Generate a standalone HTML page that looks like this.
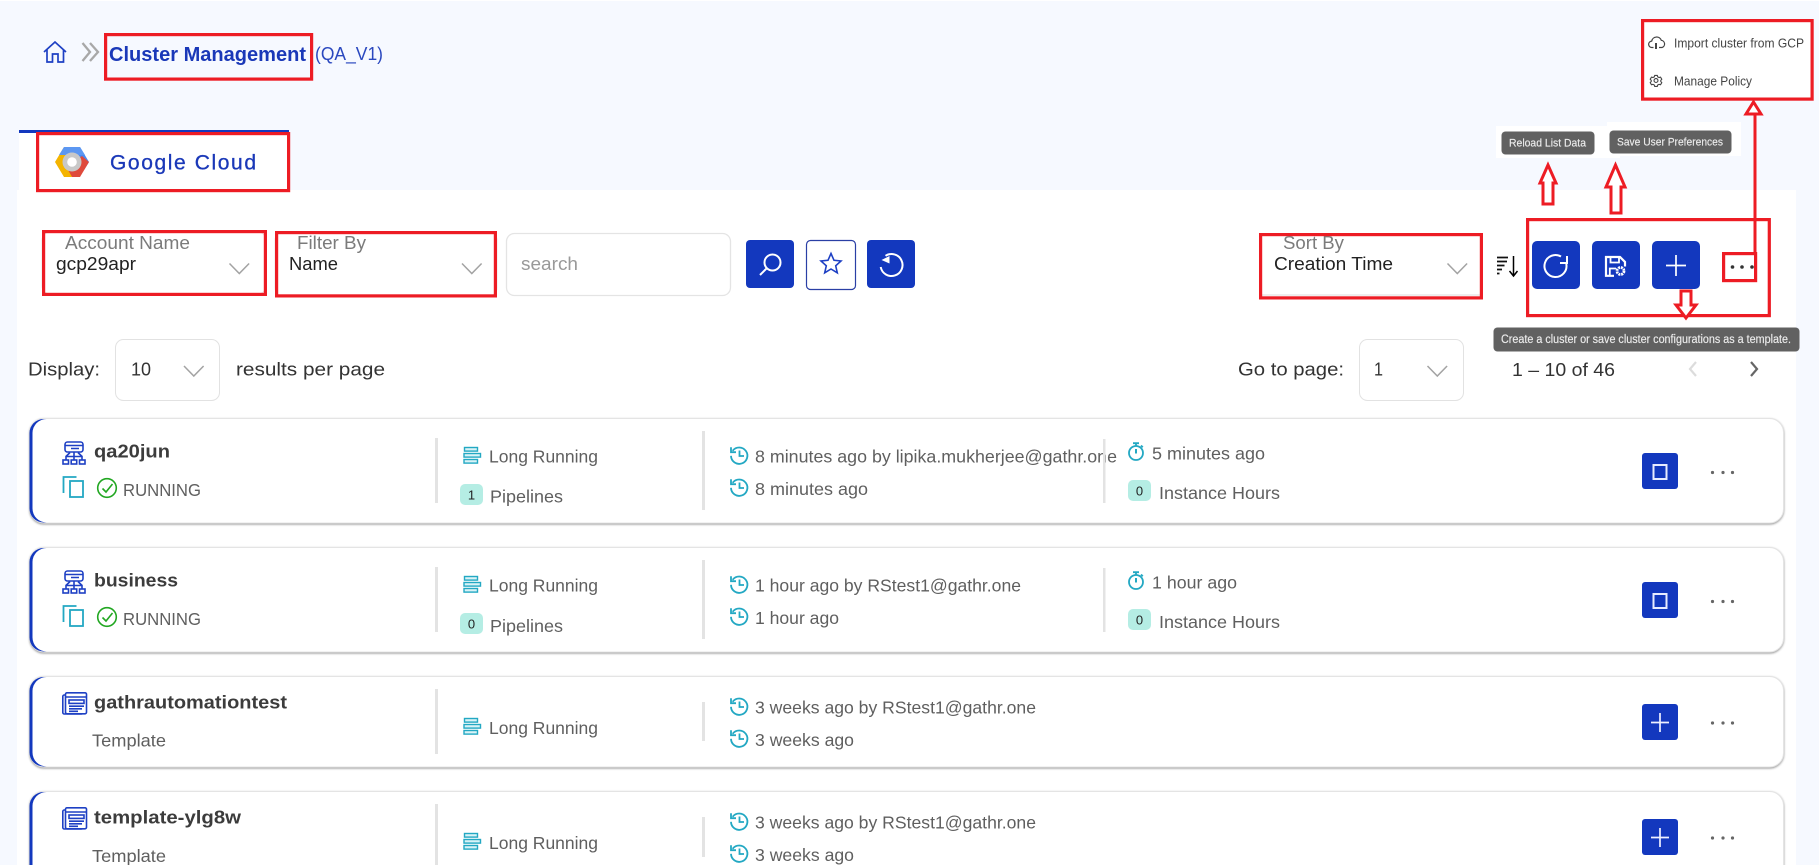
<!DOCTYPE html>
<html lang="en">
<head>
<meta charset="utf-8">
<title>Cluster Management</title>
<style>
html,body{margin:0;padding:0;background:#f6f9ff;width:1819px;height:865px;overflow:hidden}
svg{display:block;font-family:"Liberation Sans",Arial,sans-serif}
.r{fill:none;stroke:#ed1c24;stroke-width:3.2}
.ar{fill:#fff;stroke:#ed1c24;stroke-width:3}
.b{fill:#1338be}
.w{fill:none;stroke:#fff;stroke-width:2}
.t{fill:#5f5f5f;font-size:17.5px}
.n{fill:#3c3c3c;font-size:18.5px;font-weight:bold}
.l{fill:#7b7b7b;font-size:18px}
.v{fill:#222;font-size:18px}
.d{fill:#333;font-size:18px}
.tt{fill:#ececec;font-size:11px;stroke:#ececec;stroke-width:.15}
.ch{fill:none;stroke:#a3a3a3;stroke-width:1.5}
.div{fill:#e3e3e3}
.bd{fill:#b5ede4}
.bt{fill:#222;font-size:13px;text-anchor:middle}
.card{fill:#fff;stroke:#e4e4e4;stroke-width:1;filter:drop-shadow(0 1.5px 1px rgba(0,0,0,.42))}
.edge{fill:#1338be}
.inner{fill:#fff}
.teal{fill:none;stroke:#23a8c3;stroke-width:1.6}
.blue{fill:none;stroke:#1e40c4;stroke-width:1.6}
.dot{fill:#666}
</style>
</head>
<body>
<svg xmlns="http://www.w3.org/2000/svg" width="1819" height="865" viewBox="0 0 1819 865">
<defs>
<g id="net" class="blue"><rect x="3" y="1" width="18" height="10" rx="2.5"/><path d="M3 4.5H21M9 7.5H17" /><path d="M12 11V19M4 19V15.5H20V19M8 11.5L4 15.5M16 11.5L20 15.5"/><rect x="1" y="19" width="5.5" height="4"/><rect x="9.2" y="19" width="5.5" height="4"/><rect x="17.5" y="19" width="5.5" height="4"/></g>
<g id="copy" class="teal" style="stroke-width:1.8"><path d="M1 17V1H14"/><rect x="7.5" y="5" width="13" height="16"/></g>
<g id="chk" fill="none" stroke="#22a722" stroke-width="1.6"><circle cx="10" cy="10" r="9.300"/><path d="M5.5 10.5L9 14L15.5 6"/></g>
<g id="type" fill="#d9f3f7" stroke="#23a8c3" stroke-width="1.4"><rect x="1.5" y="1" width="13" height="3.6"/><rect x="1" y="7" width="16.5" height="3.6"/><rect x="1" y="13" width="13.5" height="3.6"/></g>
<g id="hist" class="teal" style="stroke-width:1.8"><path d="M2.6 4.8A8.2 8.2 0 1 1 1 9.8"/><path d="M1 1.2V6.2H6" /><path d="M9.5 4.5V10H14"/></g>
<g id="sw" class="teal" style="stroke-width:1.8"><circle cx="8" cy="11" r="7"/><path d="M5 1.2H11M8 1.2V4M13 3.5L14.8 5.3"/><path d="M8 7V11.5" stroke-width="2"/></g>
<g id="tpl" class="blue"><rect x="0.8" y="3" width="20" height="19" rx="1.5"/><rect x="3.5" y="0.8" width="21" height="21" rx="1.5" fill="#fff"/><path d="M3.5 5H24.5" /><rect x="7" y="8" width="15" height="3.4"/><path d="M7 14.2H22M7 16.8H20M7 19.3H16"/></g>
<g id="ch"><path class="ch" d="M0 0L9.8 10L19.6 0"/></g>
<g id="dots"><circle class="dot" cx="0" cy="0" r="1.600"/><circle class="dot" cx="10.500" cy="0" r="1.600"/><circle class="dot" cx="20" cy="0" r="1.600"/></g>
<g id="stop"><rect class="b" width="36" height="36" rx="3"/><rect x="11.5" y="12" width="13" height="14" fill="none" stroke="#e8ebff" stroke-width="2"/></g>
<g id="add"><rect class="b" width="36" height="36" rx="3"/><path d="M18 9V28M9 18.5H27" stroke="#eef0ff" stroke-width="1.7"/></g>
</defs>

<!-- page surfaces -->
<rect width="1819" height="1" fill="#fff"/>
<rect x="17" y="190" width="1779" height="675" fill="#fff"/>
<rect x="19" y="130" width="270" height="60" fill="#fff"/>
<rect x="19" y="130" width="270" height="3" fill="#1338be"/>

<!-- breadcrumb -->
<path d="M44 52L55 42L66 52M47 49.500V62H52.500V54H58V62H63.500V49.500" fill="none" stroke="#1e40c4" stroke-width="1.700"/>
<path d="M82.500 43L90 52L82.500 61M90 43L98 52L90 61" fill="none" stroke="#a8a8a8" stroke-width="2.300"/>
<text x="109" y="61" font-size="20.500" font-weight="bold" fill="#1a38b8" textLength="197" lengthAdjust="spacingAndGlyphs">Cluster Management</text>
<text x="315" y="60" font-size="18" fill="#2a48bf" textLength="68" lengthAdjust="spacingAndGlyphs">(QA_V1)</text>
<rect class="r" x="105.600" y="34.600" width="206" height="44.500"/>

<!-- tab -->
<path d="M64 147H80L89 162L84 170L72 162Z" fill="#4a8af0"/>
<path d="M89 162L80 177H72L66 170L72 162L82 156Z" fill="#df4a3c"/>
<path d="M55 162L64 147L72 155L67 168L72 177H64Z" fill="#f4b400"/>
<path d="M64 147H80L85 155H59Z" fill="#5c97f2"/>
<circle cx="72" cy="162" r="9.500" fill="#c8c8c8"/>
<circle cx="72" cy="162" r="4.800" fill="#fff"/>
<text x="110" y="169.300" font-size="21" fill="#1a38b8" stroke="#1a38b8" stroke-width=".3" textLength="146" lengthAdjust="spacing">Google Cloud</text>
<rect class="r" x="37.600" y="133.600" width="251" height="57"/>

<!-- top right menu -->
<rect x="1641" y="19" width="172" height="81" fill="#fff"/>
<path d="M1653.500 47.500h-1.500a3.200 3.200 0 0 1-.3-6.400a5 5 0 0 1 9.600-.8a3.700 3.700 0 0 1 .7 7.200H1659" fill="none" stroke="#444" stroke-width="1.200"/>
<path d="M1656 43V49" stroke="#444" stroke-width="2"/>
<g fill="none" stroke="#444" stroke-width="1.300" transform="translate(1656 80.500) scale(.85) translate(-1656 -80)"><circle cx="1656" cy="80" r="2.300"/><path d="M1654.500 74h3l.5 1.700 1.600.8 1.700-.5 1.500 2.500-1.200 1.400v1.200l1.200 1.400-1.500 2.500-1.700-.5-1.600.8-.5 1.700h-3l-.5-1.700-1.600-.8-1.700.5-1.500-2.500 1.200-1.400v-1.200l-1.200-1.400 1.500-2.500 1.700.5 1.600-.8z"/></g>
<text x="1674" y="47.500" font-size="13" fill="#444" textLength="130" lengthAdjust="spacingAndGlyphs">Import cluster from GCP</text>
<text x="1674" y="85.700" font-size="13" fill="#444" textLength="78" lengthAdjust="spacingAndGlyphs">Manage Policy</text>
<rect class="r" x="1642.600" y="20.600" width="169.500" height="78.500"/>

<!-- tooltips -->
<rect x="1496" y="126" width="124" height="32" fill="#fff"/>
<rect x="1607" y="122" width="134" height="34" fill="#fff"/>
<rect x="1501.500" y="131.500" width="93" height="23" rx="4" fill="#616161"/>
<rect x="1609.500" y="130.500" width="122" height="23" rx="4" fill="#616161"/>
<text class="tt" x="1509" y="146.700" textLength="77" lengthAdjust="spacingAndGlyphs">Reload List Data</text>
<text class="tt" x="1617" y="145.700" textLength="106" lengthAdjust="spacingAndGlyphs">Save User Preferences</text>

<!-- arrows -->
<path class="ar" d="M1548 165L1556 183H1553V204H1543V183H1540Z"/>
<path class="ar" d="M1615.500 165L1625 187H1621V213H1611V187H1606Z"/>
<path d="M1755 113V254" stroke="#ed1c24" stroke-width="3" fill="none"/>
<path class="ar" d="M1753.500 102L1761 114H1746Z"/>

<!-- filters -->
<rect x="42" y="232" width="224" height="62" rx="8" fill="#fff" stroke="#e6e6e6"/>
<rect x="275" y="232" width="222" height="64" rx="8" fill="#fff" stroke="#e6e6e6"/>
<text class="l" x="65" y="249" textLength="125" lengthAdjust="spacingAndGlyphs">Account Name</text>
<text class="v" x="56" y="270" textLength="80" lengthAdjust="spacingAndGlyphs">gcp29apr</text>
<use href="#ch" x="229.500" y="263.500"/>
<rect class="r" x="43.600" y="231.600" width="221.800" height="62.800"/>
<text class="l" x="297" y="249" textLength="69" lengthAdjust="spacingAndGlyphs">Filter By</text>
<text class="v" x="289" y="270" textLength="49" lengthAdjust="spacingAndGlyphs">Name</text>
<use href="#ch" x="462" y="263.500"/>
<rect class="r" x="276.600" y="232.600" width="218.800" height="63.300"/>

<rect x="506.500" y="233.500" width="224" height="62" rx="8" fill="#fff" stroke="#e4e4e4" stroke-width="1.300"/>
<text x="521" y="270" font-size="18" fill="#999" textLength="57" lengthAdjust="spacingAndGlyphs">search</text>

<rect class="b" x="746" y="240" width="48" height="48" rx="4"/>
<circle class="w" cx="772.500" cy="262.500" r="8"/>
<path class="w" d="M766.500 268.500L760 275"/>
<rect x="806.500" y="240.500" width="49" height="49" rx="4" fill="#fff" stroke="#2a3fa5" stroke-width="1.200"/>
<path d="M831 253.500L834 260.300L841 261L835.700 265.800L837.300 272.800L831 269L824.700 272.800L826.300 265.800L821 261L828 260.300Z" fill="none" stroke="#1e40c4" stroke-width="1.600"/>
<rect class="b" x="867" y="240" width="48" height="48" rx="4"/>
<path class="w" d="M885.500 255.800A11 11 0 1 1 880.700 267"/>
<path d="M881.500 260L889.500 256V263.500Z" fill="#fff"/>

<!-- sort -->
<rect x="1261" y="235" width="220" height="60" fill="#fff"/>
<path d="M1262 295H1481" stroke="#ddd" stroke-width="1"/>
<text class="l" x="1283" y="249" textLength="61" lengthAdjust="spacingAndGlyphs">Sort By</text>
<text class="v" x="1274" y="270" textLength="119" lengthAdjust="spacingAndGlyphs">Creation Time</text>
<use href="#ch" x="1447.500" y="263.500"/>
<rect class="r" x="1260.600" y="234.600" width="220.800" height="63.300"/>

<path d="M1497 257.500H1508M1497 261.500H1507M1497 265.500H1504.500M1497 269.500H1502M1497 273.500H1499.500" stroke="#111" stroke-width="1.800" fill="none"/>
<path d="M1513.500 256V275.500M1509.500 271L1513.500 276L1517.500 271" stroke="#000" stroke-width="1.500" fill="none"/>

<!-- action buttons -->
<rect class="b" x="1532" y="241" width="48" height="48" rx="5"/>
<path class="w" d="M1566.300 264A11 11 0 1 1 1561 256.500"/>
<path class="w" d="M1567 256V263H1560" stroke-width="1.800"/>
<rect class="b" x="1592" y="241" width="48" height="48" rx="5"/>
<path d="M1614 275.800H1606V257H1620L1625 262V266.500" fill="none" stroke="#fff" stroke-width="2.200"/>
<path d="M1610.500 257.500V262.500H1619V257.500M1609.800 275V268.500H1616" fill="none" stroke="#fff" stroke-width="1.800"/>
<circle cx="1620.500" cy="271" r="3.500" fill="none" stroke="#fff" stroke-width="2.800" stroke-dasharray="2 .8"/>
<rect class="b" x="1652" y="241" width="48" height="48" rx="5"/>
<path d="M1676 255V276M1666 265.500H1686" stroke="#fff" stroke-width="1.700"/>
<circle cx="1732.500" cy="267" r="1.800" fill="#333"/><circle cx="1742" cy="267" r="1.800" fill="#333"/><circle cx="1752" cy="267" r="1.800" fill="#333"/>
<rect class="r" x="1723.600" y="253.600" width="32" height="27"/>
<rect class="r" x="1527.600" y="219.600" width="241.700" height="96"/>
<path class="ar" d="M1686 318L1696 305H1691V291H1681V305H1676Z"/>

<!-- long tooltip -->
<rect x="1493.500" y="327.500" width="306" height="24" rx="4" fill="#616161"/>
<text x="1501" y="343" font-size="11.500" fill="#ececec" stroke="#ececec" stroke-width=".15" textLength="290" lengthAdjust="spacingAndGlyphs">Create a cluster or save cluster configurations as a template.</text>

<!-- paging row -->
<text class="d" x="28" y="375.700" textLength="72" lengthAdjust="spacingAndGlyphs">Display:</text>
<rect x="115.500" y="339.500" width="104" height="61" rx="8" fill="#fff" stroke="#e2e2e2"/>
<text class="d" x="131" y="375.700" textLength="20" lengthAdjust="spacingAndGlyphs">10</text>
<use href="#ch" x="184" y="366"/>
<text class="d" x="236" y="375.700" textLength="149" lengthAdjust="spacingAndGlyphs">results per page</text>
<text class="d" x="1238" y="375.700" textLength="106" lengthAdjust="spacingAndGlyphs">Go to page:</text>
<rect x="1359.500" y="339.500" width="104" height="61" rx="8" fill="#fff" stroke="#e2e2e2"/>
<text class="d" x="1374" y="375.700" textLength="9" lengthAdjust="spacingAndGlyphs">1</text>
<use href="#ch" x="1427.500" y="366"/>
<text class="d" x="1512" y="376" textLength="103" lengthAdjust="spacingAndGlyphs">1 – 10 of 46</text>
<path d="M1696 362L1690 369L1696 376" fill="none" stroke="#dcdcdc" stroke-width="2.200"/>
<path d="M1751 362L1757 369L1751 376" fill="none" stroke="#666" stroke-width="2.200"/>

<!-- card 1 -->
<rect class="card" x="30" y="418.500" width="1753.500" height="104.500" rx="14"/>
<rect class="edge" x="29.500" y="419" width="40" height="103.500" rx="14"/>
<rect class="inner" x="32.500" y="419" width="60" height="103.500" rx="14"/>
<use href="#net" x="62" y="441"/>
<text class="n" x="94" y="457.300" textLength="76" lengthAdjust="spacingAndGlyphs">qa20jun</text>
<use href="#copy" x="62.500" y="476"/>
<use href="#chk" x="97" y="478"/>
<text class="t" x="123" y="496" textLength="78" lengthAdjust="spacingAndGlyphs">RUNNING</text>
<rect class="div" x="435" y="438" width="3" height="65"/>
<use href="#type" x="463" y="446.500"/>
<text class="t" x="489" y="462.700" textLength="109" lengthAdjust="spacingAndGlyphs">Long Running</text>
<rect class="bd" x="460" y="484" width="23" height="21" rx="5"/>
<text class="bt" x="471.500" y="499.300">1</text>
<text class="t" x="490" y="502.700" textLength="73" lengthAdjust="spacingAndGlyphs">Pipelines</text>
<rect class="div" x="702" y="431" width="3" height="79"/>
<use href="#hist" x="730" y="446"/>
<text class="t" x="755" y="462.700" textLength="362" lengthAdjust="spacingAndGlyphs">8 minutes ago by lipika.mukherjee@gathr.one</text>
<use href="#hist" x="730" y="478"/>
<text class="t" x="755" y="495" textLength="113" lengthAdjust="spacingAndGlyphs">8 minutes ago</text>
<rect class="div" x="1103" y="439" width="2.500" height="64"/>
<use href="#sw" x="1128" y="442"/>
<text class="t" x="1152" y="459.300" textLength="113" lengthAdjust="spacingAndGlyphs">5 minutes ago</text>
<rect class="bd" x="1128" y="480" width="23" height="21" rx="5"/>
<text class="bt" x="1139.500" y="495.300">0</text>
<text class="t" x="1159" y="499" textLength="121" lengthAdjust="spacingAndGlyphs">Instance Hours</text>
<use href="#stop" x="1642" y="453"/>
<use href="#dots" x="1712.500" y="472.500"/>

<!-- card 2 -->
<rect class="card" x="30" y="547.500" width="1753.500" height="104.500" rx="14"/>
<rect class="edge" x="29.500" y="548" width="40" height="103.500" rx="14"/>
<rect class="inner" x="32.500" y="548" width="60" height="103.500" rx="14"/>
<use href="#net" x="62" y="570"/>
<text class="n" x="94" y="586.300" textLength="84" lengthAdjust="spacingAndGlyphs">business</text>
<use href="#copy" x="62.500" y="605"/>
<use href="#chk" x="97" y="607"/>
<text class="t" x="123" y="625" textLength="78" lengthAdjust="spacingAndGlyphs">RUNNING</text>
<rect class="div" x="435" y="567" width="3" height="65"/>
<use href="#type" x="463" y="575.500"/>
<text class="t" x="489" y="591.700" textLength="109" lengthAdjust="spacingAndGlyphs">Long Running</text>
<rect class="bd" x="460" y="613" width="23" height="21" rx="5"/>
<text class="bt" x="471.500" y="628.300">0</text>
<text class="t" x="490" y="632" textLength="73" lengthAdjust="spacingAndGlyphs">Pipelines</text>
<rect class="div" x="702" y="560" width="3" height="79"/>
<use href="#hist" x="730" y="575"/>
<text class="t" x="755" y="591.700" textLength="266" lengthAdjust="spacingAndGlyphs">1 hour ago by RStest1@gathr.one</text>
<use href="#hist" x="730" y="607"/>
<text class="t" x="755" y="624" textLength="84" lengthAdjust="spacingAndGlyphs">1 hour ago</text>
<rect class="div" x="1103" y="568" width="2.500" height="64"/>
<use href="#sw" x="1128" y="571"/>
<text class="t" x="1152" y="588.300" textLength="85" lengthAdjust="spacingAndGlyphs">1 hour ago</text>
<rect class="bd" x="1128" y="609" width="23" height="21" rx="5"/>
<text class="bt" x="1139.500" y="624.300">0</text>
<text class="t" x="1159" y="628" textLength="121" lengthAdjust="spacingAndGlyphs">Instance Hours</text>
<use href="#stop" x="1642" y="582"/>
<use href="#dots" x="1712.500" y="601.500"/>

<!-- card 3 -->
<rect class="card" x="30" y="676.500" width="1753.500" height="90.500" rx="14"/>
<rect class="edge" x="29.500" y="677" width="40" height="89.500" rx="14"/>
<rect class="inner" x="32.500" y="677" width="60" height="89.500" rx="14"/>
<use href="#tpl" x="62" y="692"/>
<text class="n" x="94" y="708.300" textLength="193" lengthAdjust="spacingAndGlyphs">gathrautomationtest</text>
<text class="t" x="92" y="746.500" textLength="74" lengthAdjust="spacingAndGlyphs">Template</text>
<rect class="div" x="435" y="689" width="3" height="65"/>
<use href="#type" x="463" y="717.500"/>
<text class="t" x="489" y="734" textLength="109" lengthAdjust="spacingAndGlyphs">Long Running</text>
<rect class="div" x="702" y="702" width="3" height="39"/>
<use href="#hist" x="730" y="697"/>
<text class="t" x="755" y="713.300" textLength="281" lengthAdjust="spacingAndGlyphs">3 weeks ago by RStest1@gathr.one</text>
<use href="#hist" x="730" y="729"/>
<text class="t" x="755" y="746" textLength="99" lengthAdjust="spacingAndGlyphs">3 weeks ago</text>
<use href="#add" x="1642" y="704"/>
<use href="#dots" x="1712.500" y="723"/>

<!-- card 4 -->
<rect class="card" x="30" y="791.500" width="1753.500" height="100" rx="14"/>
<rect class="edge" x="29.500" y="792" width="40" height="99" rx="14"/>
<rect class="inner" x="32.500" y="792" width="60" height="99" rx="14"/>
<use href="#tpl" x="62" y="807"/>
<text class="n" x="94" y="823.300" textLength="147" lengthAdjust="spacingAndGlyphs">template-ylg8w</text>
<text class="t" x="92" y="862" textLength="74" lengthAdjust="spacingAndGlyphs">Template</text>
<rect class="div" x="435" y="804" width="3" height="61"/>
<use href="#type" x="463" y="832.500"/>
<text class="t" x="489" y="849" textLength="109" lengthAdjust="spacingAndGlyphs">Long Running</text>
<rect class="div" x="702" y="817" width="3" height="40"/>
<use href="#hist" x="730" y="812"/>
<text class="t" x="755" y="828.300" textLength="281" lengthAdjust="spacingAndGlyphs">3 weeks ago by RStest1@gathr.one</text>
<use href="#hist" x="730" y="844"/>
<text class="t" x="755" y="861" textLength="99" lengthAdjust="spacingAndGlyphs">3 weeks ago</text>
<use href="#add" x="1642" y="819"/>
<use href="#dots" x="1712.500" y="838"/>
</svg>
</body>
</html>
